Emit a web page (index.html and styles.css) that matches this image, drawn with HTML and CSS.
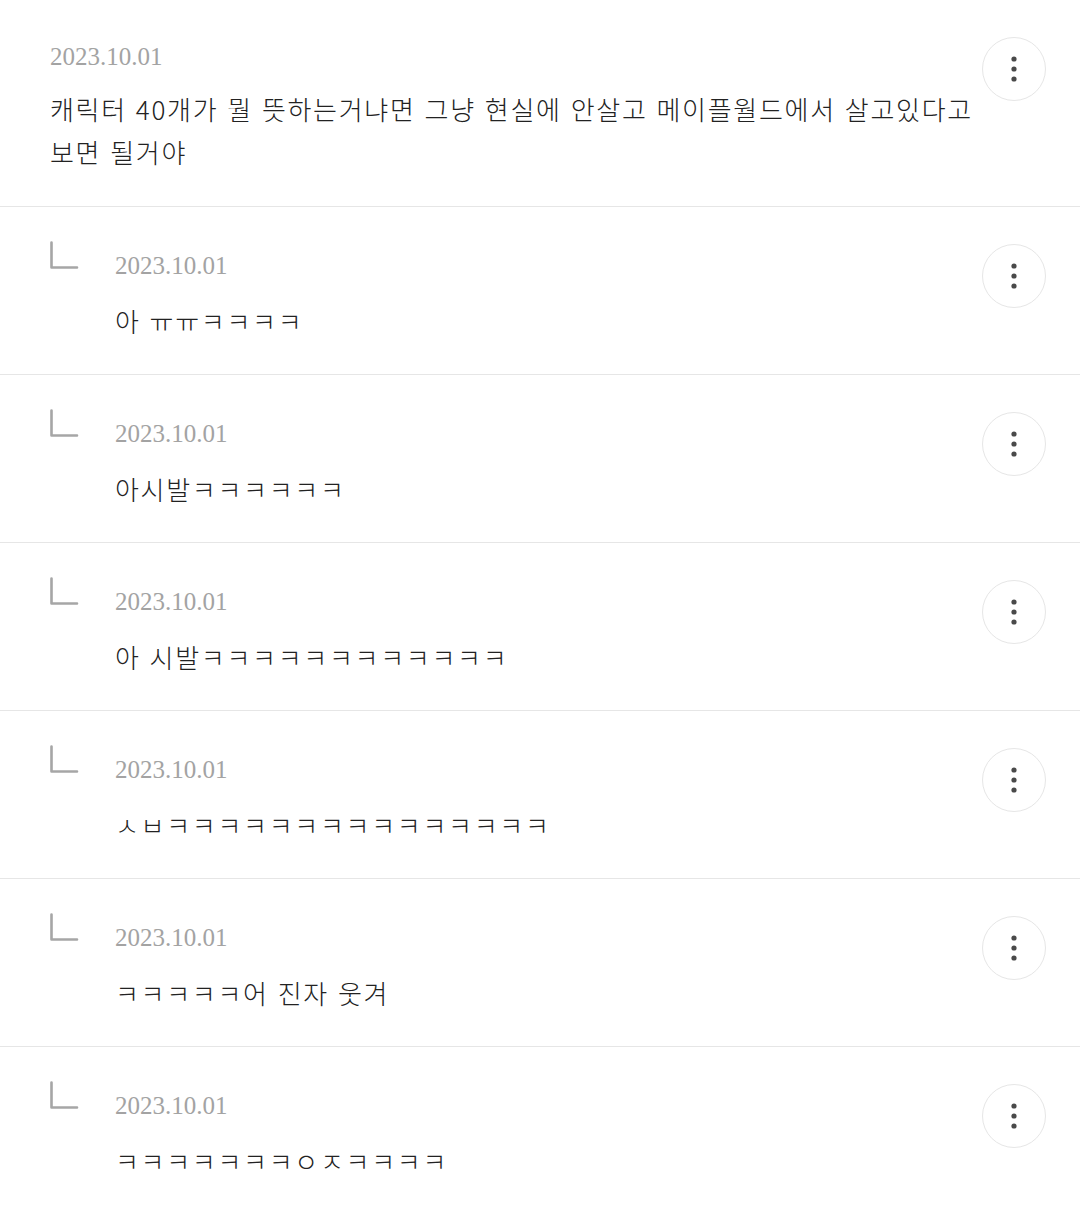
FILE: index.html
```html
<!DOCTYPE html>
<html lang="ko">
  <head>
    <meta charset="utf-8">
    <title>댓글</title>
    <link rel="stylesheet" href="styles.css">
  </head>
  <body>
    <ul class="comments">
      <li class="comment comment--root">
        <div class="comment-body">
          <p class="comment-date">2023.10.01</p>
          <p class="comment-text">캐릭터 40개가 뭘 뜻하는거냐면 그냥 현실에 안살고 메이플월드에서 살고있다고 보면 될거야</p>
        </div>
        <button class="more-btn" type="button" aria-label="더보기">
          <svg width="8" height="28" viewBox="0 0 8 28"><circle cx="4" cy="4" r="2.6"/><circle cx="4" cy="14" r="2.6"/><circle cx="4" cy="24" r="2.6"/></svg>
        </button>
      </li>

      <li class="comment comment--reply">
        <svg class="reply-mark" width="30" height="30" viewBox="0 0 30 30"><path d="M1.5 1.5 V26.5 H27"/></svg>
        <div class="comment-body">
          <p class="comment-date">2023.10.01</p>
          <p class="comment-text">아 ㅠㅠㅋㅋㅋㅋ</p>
        </div>
        <button class="more-btn" type="button" aria-label="더보기">
          <svg width="8" height="28" viewBox="0 0 8 28"><circle cx="4" cy="4" r="2.6"/><circle cx="4" cy="14" r="2.6"/><circle cx="4" cy="24" r="2.6"/></svg>
        </button>
      </li>

      <li class="comment comment--reply">
        <svg class="reply-mark" width="30" height="30" viewBox="0 0 30 30"><path d="M1.5 1.5 V26.5 H27"/></svg>
        <div class="comment-body">
          <p class="comment-date">2023.10.01</p>
          <p class="comment-text">아시발ㅋㅋㅋㅋㅋㅋ</p>
        </div>
        <button class="more-btn" type="button" aria-label="더보기">
          <svg width="8" height="28" viewBox="0 0 8 28"><circle cx="4" cy="4" r="2.6"/><circle cx="4" cy="14" r="2.6"/><circle cx="4" cy="24" r="2.6"/></svg>
        </button>
      </li>

      <li class="comment comment--reply">
        <svg class="reply-mark" width="30" height="30" viewBox="0 0 30 30"><path d="M1.5 1.5 V26.5 H27"/></svg>
        <div class="comment-body">
          <p class="comment-date">2023.10.01</p>
          <p class="comment-text">아 시발ㅋㅋㅋㅋㅋㅋㅋㅋㅋㅋㅋㅋ</p>
        </div>
        <button class="more-btn" type="button" aria-label="더보기">
          <svg width="8" height="28" viewBox="0 0 8 28"><circle cx="4" cy="4" r="2.6"/><circle cx="4" cy="14" r="2.6"/><circle cx="4" cy="24" r="2.6"/></svg>
        </button>
      </li>

      <li class="comment comment--reply">
        <svg class="reply-mark" width="30" height="30" viewBox="0 0 30 30"><path d="M1.5 1.5 V26.5 H27"/></svg>
        <div class="comment-body">
          <p class="comment-date">2023.10.01</p>
          <p class="comment-text">ㅅㅂㅋㅋㅋㅋㅋㅋㅋㅋㅋㅋㅋㅋㅋㅋㅋ</p>
        </div>
        <button class="more-btn" type="button" aria-label="더보기">
          <svg width="8" height="28" viewBox="0 0 8 28"><circle cx="4" cy="4" r="2.6"/><circle cx="4" cy="14" r="2.6"/><circle cx="4" cy="24" r="2.6"/></svg>
        </button>
      </li>

      <li class="comment comment--reply">
        <svg class="reply-mark" width="30" height="30" viewBox="0 0 30 30"><path d="M1.5 1.5 V26.5 H27"/></svg>
        <div class="comment-body">
          <p class="comment-date">2023.10.01</p>
          <p class="comment-text">ㅋㅋㅋㅋㅋ어 진자 웃겨</p>
        </div>
        <button class="more-btn" type="button" aria-label="더보기">
          <svg width="8" height="28" viewBox="0 0 8 28"><circle cx="4" cy="4" r="2.6"/><circle cx="4" cy="14" r="2.6"/><circle cx="4" cy="24" r="2.6"/></svg>
        </button>
      </li>

      <li class="comment comment--reply">
        <svg class="reply-mark" width="30" height="30" viewBox="0 0 30 30"><path d="M1.5 1.5 V26.5 H27"/></svg>
        <div class="comment-body">
          <p class="comment-date">2023.10.01</p>
          <p class="comment-text">ㅋㅋㅋㅋㅋㅋㅋㅇㅈㅋㅋㅋㅋ</p>
        </div>
        <button class="more-btn" type="button" aria-label="더보기">
          <svg width="8" height="28" viewBox="0 0 8 28"><circle cx="4" cy="4" r="2.6"/><circle cx="4" cy="14" r="2.6"/><circle cx="4" cy="24" r="2.6"/></svg>
        </button>
      </li>
    </ul>
  </body>
</html>
```

FILE: styles.css
```css
body {
  margin: 0;
  background: #fff;
  color: #222;
  font-family: "Noto Sans CJK KR", "Noto Sans", sans-serif;
}

.comments {
  list-style: none;
  margin: 0;
  padding: 0;
}

/* one comment row: [reply mark] body [more button] */
.comment {
  display: flex;
  align-items: flex-start;
  padding: 37px 34px 32px 50px;
  border-bottom: 1px solid #e6e6e6;
}

.comment-body {
  flex: 1;
  min-width: 0;
  padding-top: 7px;
}

.comment-date {
  margin: 0;
  font-family: "Liberation Serif", serif;
  font-size: 25px;
  line-height: 30px;
  color: #a3a3a3;
}

.comment-text {
  margin: 18px 0 0;
  font-size: 26px;
  font-weight: 300;
  line-height: 43px;
  letter-spacing: 1.7px;
  word-break: keep-all;
}

.comment--root {
  padding-bottom: 33px;
}
.comment--root .comment-body {
  padding-top: 5px;
}
.comment--root .comment-text {
  margin-top: 15px;
}

.reply-mark {
  flex: none;
  display: block;
  width: 30px;
  height: 30px;
  margin: -3px 35px 0 0;
}
.reply-mark path {
  fill: none;
  stroke: #a6a6a6;
  stroke-width: 2.6;
  stroke-linecap: round;
  stroke-linejoin: round;
}

.more-btn {
  flex: none;
  display: flex;
  align-items: center;
  justify-content: center;
  width: 64px;
  height: 64px;
  padding: 0;
  border: 1px solid #e6e6e6;
  border-radius: 50%;
  background: #fff;
}
.more-btn svg {
  display: block;
  fill: #4a4a4a;
}
```
